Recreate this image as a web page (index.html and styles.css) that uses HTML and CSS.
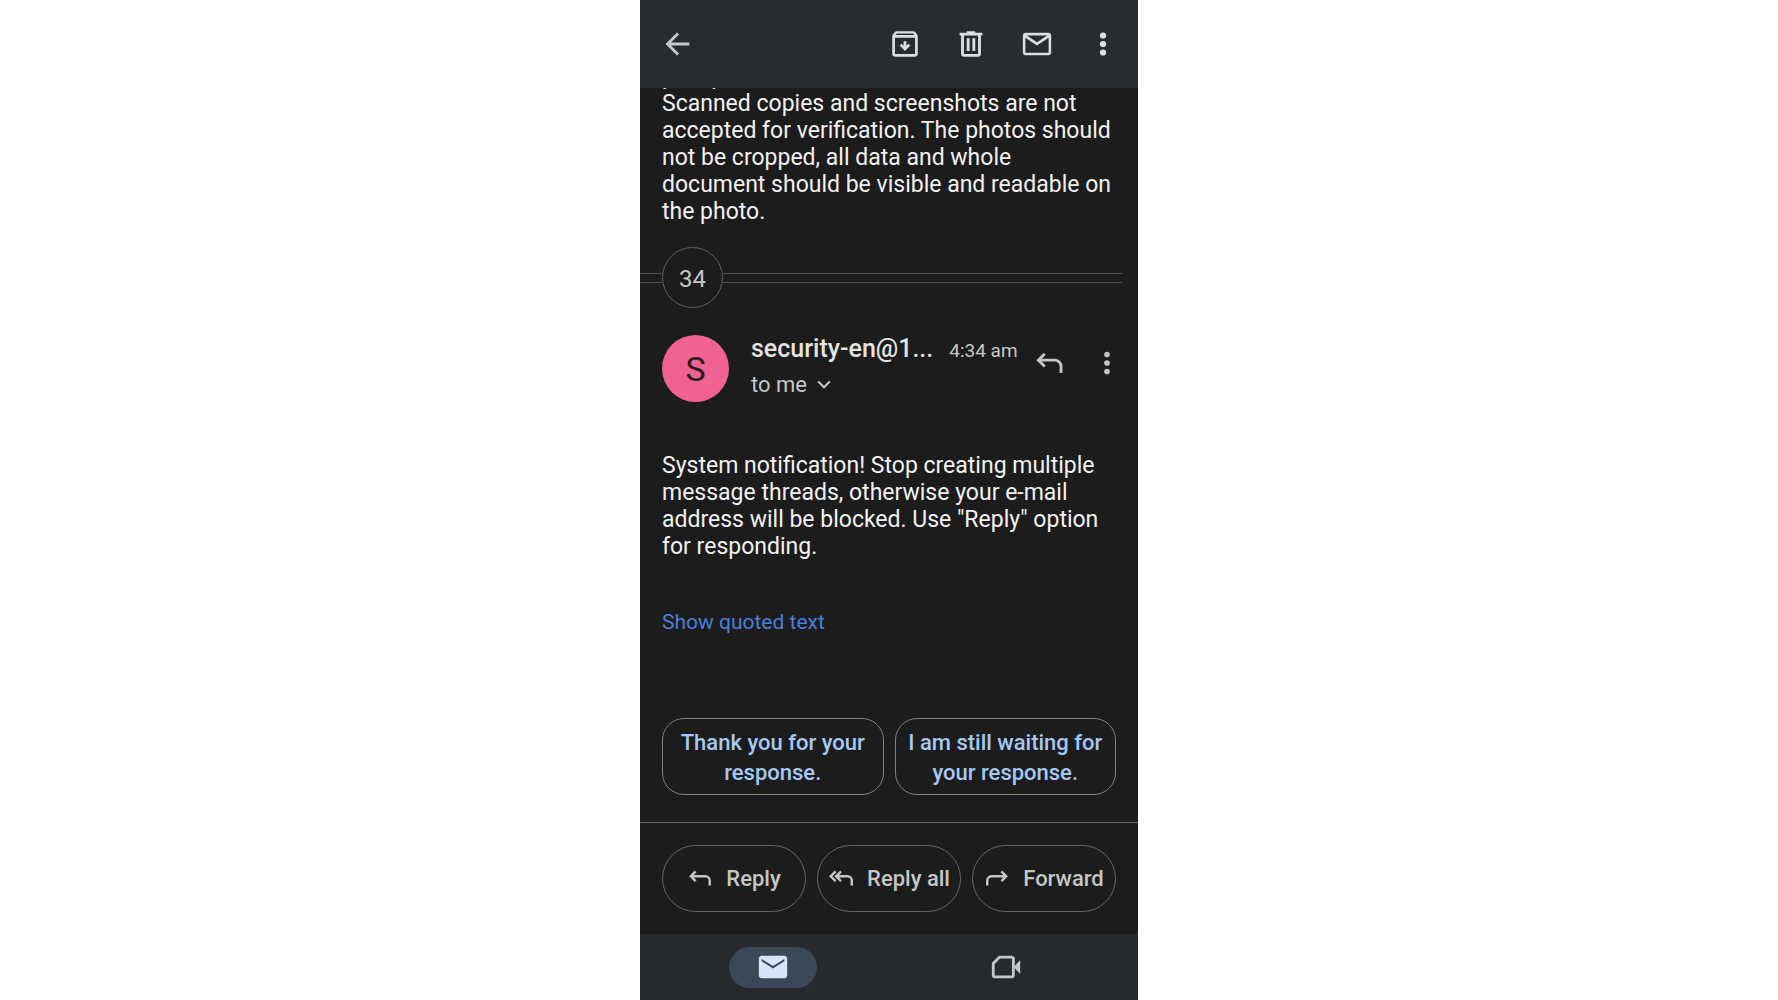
FILE: index.html
```html
<!DOCTYPE html>
<html lang="en">
<head>
  <meta charset="UTF-8">
  <meta name="viewport" content="width=device-width, initial-scale=1.0">
  <title>Mail</title>
  <link rel="stylesheet" href="styles.css">
</head>

<body>
  <div class="app">
    <!-- Top toolbar -->
    <header class="toolbar">
      <button class="icon-button back" aria-label="Back">
        <svg class="icon" viewBox="0 0 24 24"><path d="M20 12H5M12 4.6L4.6 12l7.4 7.4" fill="none" stroke="currentColor" stroke-width="2"/></svg>
      </button>
      <button class="icon-button" aria-label="Archive">
        <svg class="icon" viewBox="0 0 24 24"><path d="M20.54 5.23l-1.39-1.68C18.88 3.21 18.47 3 18 3H6c-.47 0-.88.21-1.16.55L3.46 5.23C3.17 5.57 3 6.02 3 6.5V19c0 1.1.9 2 2 2h14c1.1 0 2-.9 2-2V6.5c0-.48-.17-.93-.46-1.27zM6.24 4.6h11.52l.83 1H5.42l.82-1zM4.9 19.1V7.6h14.2v11.5H4.9zM11 10h2v3.2l1.5-1.4 1.3 1.3-3.8 3.8-3.8-3.8 1.3-1.3 1.5 1.4z"/></svg>
      </button>
      <button class="icon-button" aria-label="Delete">
        <svg class="icon" viewBox="0 0 24 24"><path d="M15 4V3H9v1H4v2h1v13c0 1.1.9 2 2 2h10c1.1 0 2-.9 2-2V6h1V4h-5zm2 15H7V6h10v13zM9 8h2v9H9zm4 0h2v9h-2z"/></svg>
      </button>
      <button class="icon-button" aria-label="Mark as unread">
        <svg class="icon" viewBox="0 0 24 24"><path d="M20 4H4c-1.1 0-2 .9-2 2v12c0 1.1.9 2 2 2h16c1.1 0 2-.9 2-2V6c0-1.1-.9-2-2-2zm-.8 2L12 10.8 4.8 6h14.4zM3.8 18.2V7.6L12 13l8.2-5.400v10.600H3.8z"/></svg>
      </button>
      <button class="icon-button" aria-label="More options">
        <svg class="icon" viewBox="0 0 24 24"><circle cx="12" cy="6" r="2.200"/><circle cx="12" cy="12" r="2.200"/><circle cx="12" cy="18" r="2.200"/></svg>
      </button>
    </header>

    <main class="thread">
      <p class="text">passport<br>Scanned copies and screenshots are not accepted for verification. The photos should not be cropped, all data and whole document should be visible and readable on the photo.</p>

      <div class="collapsed">
        <button class="count" aria-label="Show 34 older messages">34</button>
      </div>

      <article class="message">
        <div class="sender">
          <div class="avatar">S</div>
          <div class="details">
            <div class="name-row">
              <span class="name">security-en@1...</span>
              <time class="time">4:34 am</time>
            </div>
            <button class="recipient">to me
              <svg class="chevron" viewBox="0 0 12 12"><path d="M1 3l5 5 5-5" fill="none" stroke="currentColor" stroke-width="1.8"/></svg>
            </button>
          </div>
          <div class="sender-actions">
            <button class="icon-button" aria-label="Reply">
              <svg class="icon" viewBox="0 0 24 24"><path d="M9 5.500L4.500 10 9 14.500M4.500 10H16a4.500 4.500 0 0 1 4.500 4.500V19" fill="none" stroke="currentColor" stroke-width="2"/></svg>
            </button>
            <button class="icon-button" aria-label="Message options">
              <svg class="icon" viewBox="0 0 24 24"><circle cx="12" cy="6" r="2"/><circle cx="12" cy="12" r="2"/><circle cx="12" cy="18" r="2"/></svg>
            </button>
          </div>
        </div>
        <p class="text">System notification! Stop creating multiple message threads, otherwise your e-mail address will be blocked. Use "Reply" option for responding.</p>
        <a class="quoted" href="#">Show quoted text</a>
      </article>

      <div class="suggestions">
        <button class="chip">Thank you for your response.</button>
        <button class="chip">I am still waiting for your response.</button>
      </div>
    </main>

    <!-- Reply buttons -->
    <div class="actions">
      <button class="action">
        <svg class="action-icon" viewBox="0 0 24 24"><path d="M8 5l-4.500 4.500L8 14M3.500 9.500H17a4 4 0 0 1 4 4V18" fill="none" stroke="currentColor" stroke-width="2.200"/></svg>
        Reply
      </button>
      <button class="action">
        <svg class="action-icon" viewBox="0 0 24 24"><path d="M7 5L2.500 9.500 7 14M12 5L7.500 9.500 12 14M7.500 9.500H18a4 4 0 0 1 4 4V18" fill="none" stroke="currentColor" stroke-width="2.200"/></svg>
        Reply all
      </button>
      <button class="action">
        <svg class="action-icon" viewBox="0 0 24 24"><path d="M16 5l4.500 4.500L16 14M20.500 9.500H7a4 4 0 0 0-4 4V18" fill="none" stroke="currentColor" stroke-width="2.200"/></svg>
        Forward
      </button>
    </div>

    <!-- Bottom navigation -->
    <nav class="tabs">
      <a class="tab active" href="#" aria-label="Mail">
        <svg class="icon" viewBox="0 0 24 24"><path d="M20 4H4c-1.100 0-2 .9-2 2v12c0 1.100.9 2 2 2h16c1.100 0 2-.9 2-2V6c0-1.100-.9-2-2-2zm0 4l-8 5-8-5V6.300l8 5 8-5V8z"/></svg>
      </a>
      <a class="tab" href="#" aria-label="Meet">
        <svg class="icon" viewBox="0 0 24 24"><path d="M7.500 5H16a1.200 1.200 0 0 1 1.200 1.200v11.600A1.200 1.200 0 0 1 16 19H4.200A1.200 1.200 0 0 1 3 17.800V9.500z" fill="none" stroke="currentColor" stroke-width="2"/><path d="M17.500 12L22 7v10z"/></svg>
      </a>
    </nav>
  </div>
</body>
</html>
```
FILE: styles.css
```css
* {
  box-sizing: border-box;
}

body {
  margin: 0;
  background-color: #fff;
  font-family: 'Roboto', 'Liberation Sans', sans-serif;
}

button {
  margin: 0;
  padding: 0;
  border: none;
  background: none;
  color: inherit;
  font: inherit;
  cursor: pointer;
}

p {
  margin: 0;
}

.app {
  display: flex;
  flex-direction: column;
  width: 100%;
  max-width: 498px;
  height: 100vh;
  margin: 0 auto;
  background-color: #1c1c1c;
  color: #c4c7c5;
}

.icon {
  display: block;
  width: 34px;
  height: 34px;
  fill: currentColor;
}

.icon-button {
  flex: none;
}

/* Toolbar */
.toolbar {
  display: flex;
  flex: none;
  align-items: center;
  gap: 32px;
  height: 88px;
  padding: 0 18px 0 21px;
  background-color: #282c30;
  color: #dcdee2;
}

.back {
  margin-right: auto;
  color: #c6c8cc;
}

/* Thread */
.thread {
  display: flex;
  flex: 1;
  flex-direction: column;
  justify-content: flex-end;
  min-height: 0;
  padding: 0 22px 27px;
  overflow: hidden;
}

.text {
  color: #f1f1f1;
  font-size: 23px;
  line-height: 27px;
}

.collapsed {
  display: flex;
  align-items: center;
  margin: 22px -6px 27px -22px;
}

.collapsed::before,
.collapsed::after {
  content: "";
  width: 22px;
  height: 8px;
  border: solid #505050;
  border-width: 1px 0;
}

.collapsed::after {
  flex: 1;
}

.count {
  width: 61px;
  height: 61px;
  padding-top: 2px;
  border: 1px solid #606060;
  border-radius: 50%;
  font-size: 24px;
}

.message {
  display: flex;
  flex-direction: column;
  align-items: flex-start;
}

.sender {
  display: flex;
  width: 100%;
  margin-bottom: 50px;
}

.avatar {
  display: flex;
  flex: none;
  align-items: center;
  justify-content: center;
  width: 67px;
  height: 67px;
  margin-right: 22px;
  border-radius: 50%;
  background-color: #f06292;
  color: #2b1a20;
  font-size: 34px;
}

.details {
  flex: 1;
  min-width: 0;
}

.name-row {
  display: flex;
  align-items: baseline;
  gap: 16px;
  line-height: 28px;
  white-space: nowrap;
}

.name {
  color: #e3e3e3;
  font-size: 25px;
  font-weight: 500;
}

.time {
  font-size: 19px;
}

.recipient {
  display: flex;
  align-items: center;
  gap: 10px;
  margin-top: 6px;
  font-size: 22px;
  line-height: 28px;
}

.chevron {
  width: 14px;
  height: 14px;
}

.sender-actions {
  display: flex;
  gap: 24px;
  height: 34px;
  margin: 11px -8px 0 0;
}

.quoted {
  margin-top: 49px;
  color: #4a80da;
  font-size: 21px;
  line-height: 27px;
  text-decoration: none;
}

.suggestions {
  display: flex;
  gap: 11px;
  margin-top: 82px;
}

.chip {
  flex: 1;
  height: 77px;
  padding: 2px 8px 0;
  border: 1px solid #808080;
  border-radius: 22px;
  color: #a6c8f5;
  font-size: 22px;
  font-weight: 500;
  line-height: 30px;
}

/* Reply buttons */
.actions {
  display: flex;
  flex: none;
  gap: 11px;
  padding: 22px;
  border-top: 1px solid #666;
}

.action {
  display: flex;
  flex: 1;
  align-items: center;
  justify-content: center;
  gap: 13px;
  height: 67px;
  border: 1px solid #666;
  border-radius: 34px;
  font-size: 22px;
  font-weight: 500;
  white-space: nowrap;
}

.action-icon {
  flex: none;
  width: 26px;
  height: 26px;
}

/* Bottom navigation */
.tabs {
  display: flex;
  flex: none;
  align-items: center;
  justify-content: space-around;
  height: 66px;
  padding: 0 16px;
  background-color: #262a2d;
}

.tab {
  display: flex;
  align-items: center;
  justify-content: center;
  width: 88px;
  height: 41px;
  border-radius: 21px;
  color: #c4c7c5;
}

.tab.active {
  background-color: #3b4858;
  color: #d7e3f8;
}
```
